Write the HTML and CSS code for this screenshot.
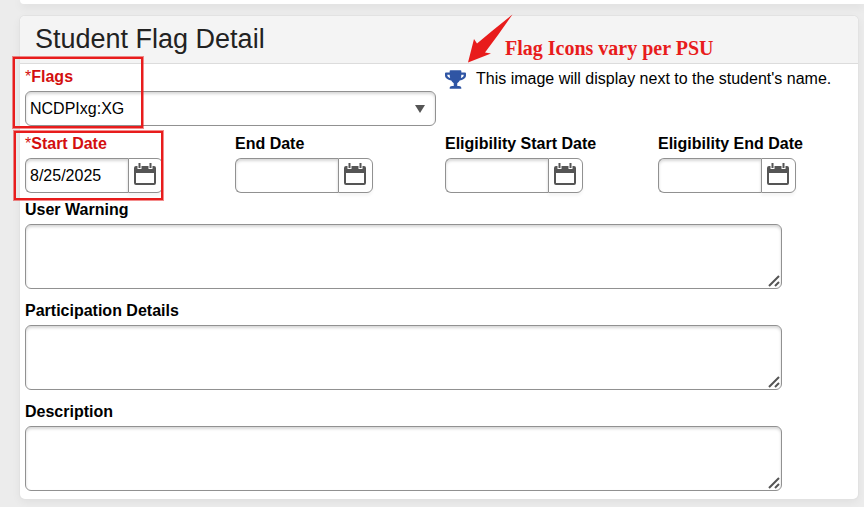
FILE: index.html
```html
<!DOCTYPE html>
<html lang="en">
<head>
    <meta charset="UTF-8">
    <meta name="viewport" content="width=device-width, initial-scale=1.0">
    <title>Student Flag Detail</title>
    <link rel="stylesheet" href="styles.css">
</head>
<body>
    <svg class="sprite" aria-hidden="true">
        <symbol id="calendar" viewBox="0 0 22 22">
            <path fill="#555" fill-rule="evenodd" d="M2 3h18q2 0 2 2v15q0 2-2 2H2q-2 0-2-2V5q0-2 2-2zM2 10v10h18V10z"/>
            <path stroke="#fff" stroke-width="4" d="M5.500 0v6M16.500 0v6"/>
            <path stroke="#555" stroke-width="2" d="M5.500 0v5M16.500 0v5"/>
        </symbol>
        <symbol id="grip" viewBox="0 0 12 12">
            <path fill="none" stroke="#555" stroke-width="2" d="M1 11L11 1M7 11l4-4"/>
        </symbol>
    </svg>

    <div class="panel-above"></div>

    <form class="panel">
        <div class="panel-header">
            <h1>Student Flag Detail</h1>
            <div class="callout">
                <svg class="callout-arrow" viewBox="0 0 46 50" aria-hidden="true">
                    <path fill="#e81c1c" d="M44.500 0.500L30 21 17 38.500l6 1L0 48.500 6 25l3 4.500L24 17z"/>
                </svg>
                Flag Icons vary per PSU
            </div>
        </div>

        <div class="panel-body">
            <div class="grid">
                <div class="field flags">
                    <label class="required" for="flags"><span class="star">*</span>Flags</label>
                    <div class="select-box">
                        <select id="flags">
                            <option>NCDPIxg:XG</option>
                        </select>
                        <svg class="caret" viewBox="0 0 10 8" aria-hidden="true"><path fill="#555" d="M0 0h10L5 8z"/></svg>
                    </div>
                    <div class="mark mark-flags"></div>
                </div>
                <div class="note">
                    <svg class="trophy" viewBox="0 0 576 512" aria-hidden="true">
                        <path fill="#2f55a4" d="M552 64H448V24c0-13.300-10.700-24-24-24H152c-13.300 0-24 10.700-24 24v40H24C10.700 64 0 74.700 0 88v56c0 35.700 22.500 72.400 61.900 100.700 31.500 22.700 69.800 37.100 110 41.700C203.300 338.500 240 360 240 360v72h-48c-35.300 0-64 20.700-64 56v12c0 6.600 5.400 12 12 12h296c6.600 0 12-5.400 12-12v-12c0-35.300-28.700-56-64-56h-48v-72s36.700-21.500 68.100-73.600c40.300-4.600 78.600-19 110-41.700 39.300-28.300 61.900-65 61.900-100.700V88c0-13.300-10.700-24-24-24zM99.300 192.800C74.900 175.200 64 155.600 64 144v-16h64.200c1 32.600 5.800 61.200 12.800 86.200-15.100-5.200-29.200-12.400-41.700-21.400zM512 144c0 16.100-17.700 36.100-35.300 48.800-12.500 9-26.700 16.200-41.800 21.400 7-25 11.800-53.600 12.800-86.200H512v16z"/>
                    </svg>
                    <span>This image will display next to the student's name.</span>
                </div>

                <div class="field">
                    <label class="required" for="start"><span class="star">*</span>Start Date</label>
                    <div class="date">
                        <input id="start" type="text" value="8/25/2025">
                        <button type="button" aria-label="Choose start date"><svg><use href="#calendar"/></svg></button>
                    </div>
                    <div class="mark mark-start"></div>
                </div>
                <div class="field">
                    <label for="end">End Date</label>
                    <div class="date">
                        <input id="end" type="text">
                        <button type="button" aria-label="Choose end date"><svg><use href="#calendar"/></svg></button>
                    </div>
                </div>
                <div class="field">
                    <label for="elig-start">Eligibility Start Date</label>
                    <div class="date">
                        <input id="elig-start" type="text">
                        <button type="button" aria-label="Choose eligibility start date"><svg><use href="#calendar"/></svg></button>
                    </div>
                </div>
                <div class="field">
                    <label for="elig-end">Eligibility End Date</label>
                    <div class="date">
                        <input id="elig-end" type="text">
                        <button type="button" aria-label="Choose eligibility end date"><svg><use href="#calendar"/></svg></button>
                    </div>
                </div>
            </div>

            <div class="texts">
                <div class="field">
                    <label for="warning">User Warning</label>
                    <div class="area">
                        <textarea id="warning"></textarea>
                        <svg class="grip"><use href="#grip"/></svg>
                    </div>
                </div>
                <div class="field">
                    <label for="details">Participation Details</label>
                    <div class="area">
                        <textarea id="details"></textarea>
                        <svg class="grip"><use href="#grip"/></svg>
                    </div>
                </div>
                <div class="field">
                    <label for="description">Description</label>
                    <div class="area">
                        <textarea id="description"></textarea>
                        <svg class="grip"><use href="#grip"/></svg>
                    </div>
                </div>
            </div>
        </div>
    </form>
</body>
</html>
```
FILE: styles.css
```css
* {
    box-sizing: border-box;
}

body {
    margin: 0;
    padding: 0 6px 8px 20px;
    background: #ececec;
    color: #000;
    font-family: "Liberation Sans", Arial, sans-serif;
    font-size: 16px;
    line-height: 20px;
}

.sprite {
    display: none;
}

/* bottom edge of the panel above the form */
.panel-above {
    height: 4px;
    margin: 0 -6px 12px 0;
    background: #fff;
    border-radius: 0 0 0 4px;
    box-shadow: 0 2px 10px rgba(0, 0, 0, 0.1);
}

.panel {
    background: #fff;
    border-radius: 5px;
    box-shadow: 0 0 0 1px #e2e2e2, 0 3px 10px rgba(0, 0, 0, 0.06);
}

.panel-header {
    position: relative;
    height: 48px;
    padding: 0 15px;
    background: #f4f4f4;
    border-bottom: 1px solid #dcdcdc;
    border-radius: 5px 5px 0 0;
}

.panel-header h1 {
    margin: 0;
    color: #222;
    font-size: 27px;
    font-weight: normal;
    line-height: 47px;
}

.callout {
    position: absolute;
    top: 21px;
    left: 485px;
    color: #e81c1c;
    font-family: "Liberation Serif", "Times New Roman", serif;
    font-size: 20px;
    font-weight: bold;
    line-height: 22px;
    white-space: nowrap;
}

.callout-arrow {
    position: absolute;
    top: -23px;
    left: -37px;
    width: 46px;
    height: 50px;
}

.panel-body {
    padding: 3px 5px 8px;
}

.grid {
    display: grid;
    grid-template-columns: 210px 210px 213px 1fr;
    row-gap: 8px;
}

.field {
    position: relative;
}

.flags {
    grid-column: span 2;
    padding-right: 9px;
}

label {
    display: block;
    width: max-content;
    margin-bottom: 4px;
    font-weight: bold;
}

.required {
    color: #d30f0f;
}

.star {
    font-weight: normal;
}

.note {
    display: flex;
    grid-column: span 2;
    gap: 10px;
    align-items: center;
    height: 24px;
    white-space: nowrap;
}

.trophy {
    flex: none;
    width: 21px;
    height: 19px;
}

select,
input,
textarea {
    display: block;
    width: 100%;
    margin: 0;
    padding: 0 4px;
    background: #fff;
    border: 1px solid #919191;
    border-radius: 6px;
    box-shadow: inset 0 2px 3px rgba(0, 0, 0, 0.16);
    color: #000;
    font: inherit;
}

select {
    height: 35px;
    appearance: none;
}

.select-box,
.area {
    position: relative;
}

.caret {
    position: absolute;
    top: 14px;
    right: 11px;
    width: 10px;
    height: 8px;
    pointer-events: none;
}

.date {
    display: flex;
    width: 138px;
    height: 35px;
}

.date input {
    flex: 1;
    min-width: 0;
    border-right: 0;
    border-radius: 6px 0 0 6px;
}

.date button {
    display: flex;
    align-items: center;
    justify-content: center;
    width: 35px;
    padding: 0 2px 3px 0;
    background: #fff;
    border: 1px solid #919191;
    border-radius: 0 6px 6px 0;
    box-shadow: 0 3px 3px rgba(0, 0, 0, 0.04);
}

.date button svg {
    width: 22px;
    height: 22px;
}

.texts {
    display: grid;
    gap: 12px;
    margin-top: 7px;
    padding-right: 71px;
}

textarea {
    height: 65px;
    padding: 6px 4px;
    resize: vertical;
}

textarea::-webkit-resizer {
    background: transparent;
}

.grip {
    position: absolute;
    right: 2px;
    bottom: 2px;
    width: 12px;
    height: 12px;
    pointer-events: none;
}

/* red boxes drawn over the required fields */
.mark {
    position: absolute;
    border: 2px solid #e81c1c;
    outline: 1px solid rgba(232, 28, 28, 0.5);
    pointer-events: none;
}

.mark-flags {
    top: -10px;
    left: -12px;
    width: 130px;
    height: 71px;
}

.mark-start {
    top: -3px;
    left: -11px;
    width: 149px;
    height: 69px;
}
```
